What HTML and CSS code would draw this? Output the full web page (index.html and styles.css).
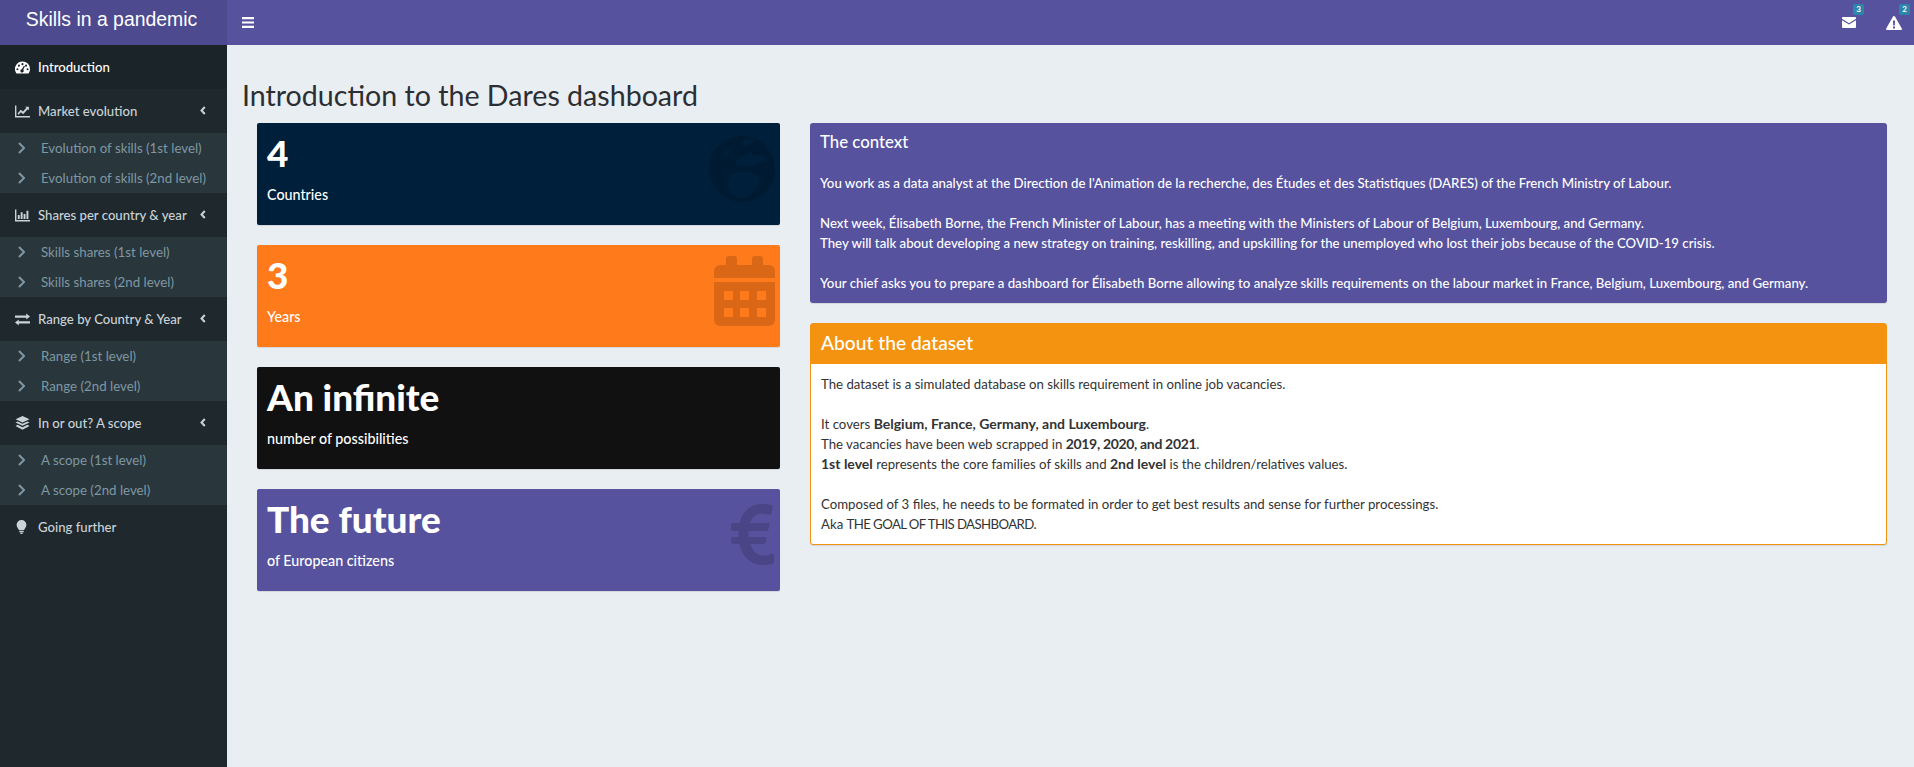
FILE: index.html
```html
<!DOCTYPE html>
<html lang="en">

<head>
    <meta charset="UTF-8">
    <title>Skills in a pandemic</title>
    <link rel="stylesheet" href="styles.css">
</head>

<body>
    <header class="topbar">
        <div class="logo">Skills in a pandemic</div>
        <div class="navbar">
            <svg class="toggle" viewBox="0 0 12 11"><path d="M0 0h12v2.200H0zM0 4.400h12v2.200H0zM0 8.800h12V11H0z"/></svg>
            <div class="notices">
                <div class="notice">
                    <svg class="notice-mail" viewBox="0 0 14 11"><path d="M1 0h12a1 1 0 0 1 1 1v.8L7 6.300 0 1.800V1a1 1 0 0 1 1-1zM0 3.200l7 4.400 7-4.400V10a1 1 0 0 1-1 1H1a1 1 0 0 1-1-1z"/></svg>
                    <span class="badge">3</span>
                </div>
                <div class="notice">
                    <svg class="notice-warn" viewBox="0 0 16 14"><path fill-rule="evenodd" d="M8 0c.5 0 .9.300 1.100.7l6.700 11.700c.4.700-.1 1.600-.9 1.600H1.100c-.8 0-1.300-.9-.9-1.600L6.900.7C7.100.3 7.500 0 8 0zM7 4.500l.2 5h1.600l.2-5zM7 10.600v2h2v-2z"/></svg>
                    <span class="badge">2</span>
                </div>
            </div>
        </div>
    </header>

    <div class="wrapper">
        <nav class="sidebar">
            <a class="menu-item active">
                <svg class="menu-icon" viewBox="0 0 16 13"><path fill-rule="evenodd" d="M8 0a8 8 0 0 1 8 8c0 1.700-.5 3.300-1.400 4.500-.2.300-.5.500-.9.500H2.300c-.4 0-.7-.2-.9-.5A8 8 0 0 1 8 0zM8 1.800a1.100 1.100 0 1 0 0 2.200 1.100 1.100 0 0 0 0-2.200zM4.200 3.400a1.100 1.100 0 1 0 0 2.200 1.100 1.100 0 0 0 0-2.200zM2.600 7.200a1.100 1.100 0 1 0 0 2.200 1.100 1.100 0 0 0 0-2.200zM13.400 7.200a1.100 1.100 0 1 0 0 2.200 1.100 1.100 0 0 0 0-2.200zM11.800 3.400a1.100 1.100 0 1 0 0 2.200 1.100 1.100 0 0 0 0-2.200zM9.600 4.600 7.200 8.400a1.700 1.700 0 1 0 1.600.6L10.600 5.200z"/></svg>
                <span>Introduction</span>
            </a>

            <a class="menu-item">
                <svg class="menu-icon" viewBox="0 0 14 11"><path d="M0 0h1.300v9.700H14V11H0zM2.400 7.400 5.300 3.800 7.500 5.600 10.600 2 9.400 1h3.600v3.400L11.800 3.300 7.600 8 5.500 6.200 3.400 8.600z"/></svg>
                <span>Market evolution</span>
                <svg class="caret" viewBox="0 0 6 9"><path d="M4.800 1 1.500 4.500 4.800 8"/></svg>
            </a>
            <div class="submenu">
                <a class="sub-item"><svg class="sub-icon" viewBox="0 0 8 12"><path d="m1 1 5 5-5 5"/></svg>Evolution of skills (1st level)</a>
                <a class="sub-item"><svg class="sub-icon" viewBox="0 0 8 12"><path d="m1 1 5 5-5 5"/></svg>Evolution of skills (2nd level)</a>
            </div>

            <a class="menu-item">
                <svg class="menu-icon" viewBox="0 0 14 11"><path d="M0 0h1.300v9.700H14V11H0zM2.600 5h1.800v3.700H2.600zM5.300 2.400h1.800v6.300H5.300zM8 4h1.800v4.700H8zM10.700 1h1.800v7.700h-1.800z"/></svg>
                <span>Shares per country &amp; year</span>
                <svg class="caret" viewBox="0 0 6 9"><path d="M4.800 1 1.500 4.500 4.800 8"/></svg>
            </a>
            <div class="submenu">
                <a class="sub-item"><svg class="sub-icon" viewBox="0 0 8 12"><path d="m1 1 5 5-5 5"/></svg>Skills shares (1st level)</a>
                <a class="sub-item"><svg class="sub-icon" viewBox="0 0 8 12"><path d="m1 1 5 5-5 5"/></svg>Skills shares (2nd level)</a>
            </div>

            <a class="menu-item">
                <svg class="menu-icon" viewBox="0 0 14 11"><path d="M10.500 0 14 2.800l-3.500 2.800V3.800H0V1.800h10.500zM3.500 5.400v1.800H14v2H3.500V11L0 8.200z"/></svg>
                <span>Range by Country &amp; Year</span>
                <svg class="caret" viewBox="0 0 6 9"><path d="M4.800 1 1.500 4.500 4.800 8"/></svg>
            </a>
            <div class="submenu">
                <a class="sub-item"><svg class="sub-icon" viewBox="0 0 8 12"><path d="m1 1 5 5-5 5"/></svg>Range (1st level)</a>
                <a class="sub-item"><svg class="sub-icon" viewBox="0 0 8 12"><path d="m1 1 5 5-5 5"/></svg>Range (2nd level)</a>
            </div>

            <a class="menu-item">
                <svg class="menu-icon menu-icon-tall" viewBox="0 0 14 14"><path d="M7 0l7 3.300-7 3.300-7-3.300zM2 5.400l5 2.400 5-2.400 2 1-7 3.300-7-3.300zM2 8.800l5 2.400 5-2.400 2 1.200-7 3.800L0 10z"/></svg>
                <span>In or out? A scope</span>
                <svg class="caret" viewBox="0 0 6 9"><path d="M4.800 1 1.500 4.500 4.800 8"/></svg>
            </a>
            <div class="submenu">
                <a class="sub-item"><svg class="sub-icon" viewBox="0 0 8 12"><path d="m1 1 5 5-5 5"/></svg>A scope (1st level)</a>
                <a class="sub-item"><svg class="sub-icon" viewBox="0 0 8 12"><path d="m1 1 5 5-5 5"/></svg>A scope (2nd level)</a>
            </div>

            <a class="menu-item">
                <svg class="menu-icon menu-icon-tall" viewBox="0 0 14 14"><path d="M6 0a4.900 4.900 0 0 1 4.900 4.900c0 2-1.500 3-2.300 5.100H3.400C2.600 7.900 1.100 6.900 1.100 4.900A4.900 4.900 0 0 1 6 0zM3.800 10.800h4.400v1.400H3.800zM4.500 12.800h3L6.800 14H5.200z"/></svg>
                <span>Going further</span>
            </a>
        </nav>

        <main class="content">
            <h1>Introduction to the Dares dashboard</h1>
            <div class="columns">
                <div class="value-col">
                    <div class="value-box navy">
                        <h3>4</h3>
                        <p>Countries</p>
                        <svg class="value-icon icon-globe" viewBox="0 0 66 66"><path fill-rule="evenodd" d="M33 0a33 33 0 1 1 0 66 33 33 0 0 1 0-66zM22 38c6-3 16-3 22-1 5 2 8 6 6 10-3 6-8 11-14 15-5 1-9-1-13-4-4-4-6-12-1-20zM26 26c2-4 8-6 11-8 3-3 8-1 7 3 3-3 8-3 11-1l3 6c-4-1-9 0-12 3-5 1-12 2-17 1-2 0-3-2-3-4zM36 4c3-1 8-1 9 1-2 2-6 5-10 5-3 0-3-4 1-6zM17 14c3-2 6 0 5 2-2 2-5 5-7 3-1-2 0-4 2-5z"/></svg>
                    </div>
                    <div class="value-box orange">
                        <h3>3</h3>
                        <p>Years</p>
                        <svg class="value-icon icon-calendar" viewBox="0 0 61 70"><path fill-rule="evenodd" d="M15 0h5a3 3 0 0 1 3 3v6h15V3a3 3 0 0 1 3-3h5a3 3 0 0 1 3 3v6h6a6 6 0 0 1 6 6v7H0v-7a6 6 0 0 1 6-6h6V3a3 3 0 0 1 3-3zM0 26h61v38a6 6 0 0 1-6 6H6a6 6 0 0 1-6-6zM10 35v9h9v-9zM26 35v9h9v-9zM43 35v9h9v-9zM10 52v9h9v-9zM26 52v9h9v-9zM43 52v9h9v-9z"/></svg>
                    </div>
                    <div class="value-box black">
                        <h3>An infinite</h3>
                        <p>number of possibilities</p>
                    </div>
                    <div class="value-box purple">
                        <h3>The future</h3>
                        <p>of European citizens</p>
                        <svg class="value-icon icon-euro" viewBox="0 0 43 61"><path d="M42 2 40 11C37 10 34 9.500 31 9.500 25 9.500 21 13 19 19H37Q39 19 38.500 21L37.500 25Q37 27 35 27H17.500C17.400 28.500 17.400 31.500 17.500 33H34Q36 33 35.500 35L34.500 38.500Q34 40 32 40H19.500C21.500 47 26 51.500 32 51.500 36 51.500 39 50.500 41 49.500Q42.500 49 43 51V58Q43 59.500 41.500 60C38 61 35 61 32 61 20 61 11 53 8.500 40H2Q0 40 0 38V35Q0 33 2 33H7.500C7.400 31.500 7.400 28.500 7.500 27H2Q0 27 0 25V21Q0 19 2 19H8.500C11 8 19 0 31 0 35 0 38 .5 41 1Q42 1.200 42 2Z"/></svg>
                    </div>
                </div>

                <div class="info-col">
                    <section class="context-box">
                        <h3>The context</h3>
                        <p>You work as a data analyst at the Direction de l'Animation de la recherche, des Études et des Statistiques (DARES) of the French Ministry of Labour.</p>
                        <p>Next week, Élisabeth Borne, the French Minister of Labour, has a meeting with the Ministers of Labour of Belgium, Luxembourg, and Germany.<br>They will talk about developing a new strategy on training, reskilling, and upskilling for the unemployed who lost their jobs because of the COVID-19 crisis.</p>
                        <p>Your chief asks you to prepare a dashboard for Élisabeth Borne allowing to analyze skills requirements on the labour market in France, Belgium, Luxembourg, and Germany.</p>
                    </section>
                    <section class="dataset-box">
                        <h3>About the dataset</h3>
                        <div class="dataset-body">
                            <p>The dataset is a simulated database on skills requirement in online job vacancies.</p>
                            <p>It covers <b>Belgium, France, Germany, and Luxembourg</b>.<br>The vacancies have been web scrapped in <b class="years">2019, 2020, and 2021</b>.<br><b>1st level</b> represents the core families of skills and <b>2nd level</b> is the children/relatives values.</p>
                            <p>Composed of 3 files, he needs to be formated in order to get best results and sense for further processings.<br>Aka <span class="caps">THE GOAL OF THIS DASHBOARD.</span></p>
                        </div>
                    </section>
                </div>
            </div>
        </main>
    </div>
</body>

</html>
```

FILE: styles.css
```css
* {
    box-sizing: border-box;
}

html,
body {
    height: 100%;
}

body {
    margin: 0;
    display: flex;
    flex-direction: column;
    font-family: 'Lato', sans-serif;
    font-size: 13.22px;
    line-height: 20px;
    color: #333;
    background-color: #e9eef3;
    overflow: hidden;
}

b {
    font-size: 14px;
}

.years {
    letter-spacing: -0.33px;
}

.caps {
    letter-spacing: -0.6px;
}

.topbar {
    display: flex;
    height: 45px;
    flex-shrink: 0;
    background-color: #56529e;
    color: #fff;
}

.logo {
    width: 227px;
    padding: 7px 4px 0 0;
    background-color: #4e4a90;
    font-family: 'Liberation Sans', sans-serif;
    font-size: 19.4px;
    text-align: center;
    line-height: 24px;
}

.navbar {
    flex: 1;
    display: flex;
    align-items: center;
    justify-content: space-between;
    padding-left: 15px;
}

.toggle {
    width: 12px;
    height: 11px;
    fill: #fff;
}

.notices {
    display: flex;
    gap: 30px;
    padding-right: 12px;
}

.notice {
    position: relative;
    display: flex;
    align-items: center;
    height: 45px;
}

.notice-mail {
    width: 14px;
    height: 11px;
    fill: #fff;
}

.notice-warn {
    width: 16px;
    height: 14px;
    fill: #fff;
}

.badge {
    position: absolute;
    top: 4px;
    right: -8px;
    width: 11px;
    height: 11px;
    border-radius: 2px;
    background-color: #2c86ab;
    font-size: 8px;
    font-weight: 700;
    line-height: 11px;
    text-align: center;
}

.wrapper {
    flex: 1;
    display: flex;
    min-height: 0;
}

.sidebar {
    width: 227px;
    flex-shrink: 0;
    background-color: #1f282d;
}

.menu-item {
    display: flex;
    align-items: center;
    height: 44px;
    padding-left: 15px;
    color: #c9d3d8;
    font-size: 13.15px;
    font-weight: 500;
}

.menu-item.active {
    background-color: #1b2428;
    color: #fff;
}

.menu-icon {
    width: 15px;
    height: 13px;
    margin-right: 8px;
    flex-shrink: 0;
    fill: currentColor;
}

.menu-icon-tall {
    height: 14px;
}

.caret {
    width: 6px;
    height: 9px;
    margin-left: auto;
    margin-right: 21px;
    margin-top: -2px;
    flex-shrink: 0;
    fill: none;
    stroke: #c9d3d8;
    stroke-width: 2;
}

.submenu {
    background-color: #29363c;
}

.sub-item {
    display: flex;
    align-items: center;
    height: 30px;
    padding-left: 18px;
    font-size: 13.3px;
    color: #7f98a3;
}

.sub-icon {
    width: 8px;
    height: 12px;
    margin-right: 15px;
    fill: none;
    stroke: #7f98a3;
    stroke-width: 2;
}

.content {
    flex: 1;
    min-width: 0;
    padding: 30px 27px 0 15px;
}

h1 {
    margin: 0 0 8px;
    font-size: 28.6px;
    font-weight: 400;
    line-height: 40px;
    color: #2b2f33;
}

.columns {
    display: flex;
    gap: 30px;
    padding-left: 15px;
}

.value-col {
    width: 523px;
    flex-shrink: 0;
    display: flex;
    flex-direction: column;
    gap: 20px;
}

.info-col {
    flex: 1;
    display: flex;
    flex-direction: column;
    gap: 20px;
}

.value-box {
    position: relative;
    height: 102px;
    padding: 9px 10px;
    border-radius: 2px;
    box-shadow: 0 1px 1px rgba(0, 0, 0, 0.1);
    color: #fff;
    overflow: hidden;
}

.value-box h3 {
    margin: 0 0 11px;
    font-size: 36.9px;
    font-weight: 900;
    line-height: 42px;
}

.value-box p {
    margin: 0;
    font-size: 14.3px;
    font-weight: 500;
}

.navy {
    background-color: #001f3a;
}

.orange {
    background-color: #ff7a1b;
}

.black {
    background-color: #111;
}

.purple {
    background-color: #56529e;
}

.value-icon {
    position: absolute;
    fill: rgba(0, 0, 0, 0.15);
}

.icon-globe {
    top: 13px;
    right: 5px;
    width: 66px;
    height: 66px;
}

.icon-calendar {
    top: 11px;
    right: 5px;
    width: 61px;
    height: 70px;
}

.icon-euro {
    top: 15px;
    right: 6px;
    width: 43px;
    height: 61px;
}

.context-box {
    height: 180px;
    padding: 9px 10px 10px;
    border-radius: 3px;
    background-color: #56529e;
    box-shadow: 0 1px 1px rgba(0, 0, 0, 0.1);
    color: #fff;
    font-size: 13.22px;
    font-weight: 500;
}

.context-box h3,
.dataset-box h3 {
    margin: 0;
    font-size: 19.2px;
    font-weight: 500;
    line-height: 20px;
}

.context-box h3 {
    margin-bottom: 21px;
    font-size: 16.8px;
}

.context-box p,
.dataset-body p {
    margin: 0 0 20px;
}

.dataset-box {
    border: 1px solid #f3930f;
    border-radius: 3px;
    background-color: #fff;
    box-shadow: 0 1px 1px rgba(0, 0, 0, 0.1);
}

.dataset-box h3 {
    padding: 9px 10px;
    height: 40px;
    background-color: #f3930f;
    color: #fff;
}

.dataset-body {
    padding: 10px;
    height: 180px;
}
```
